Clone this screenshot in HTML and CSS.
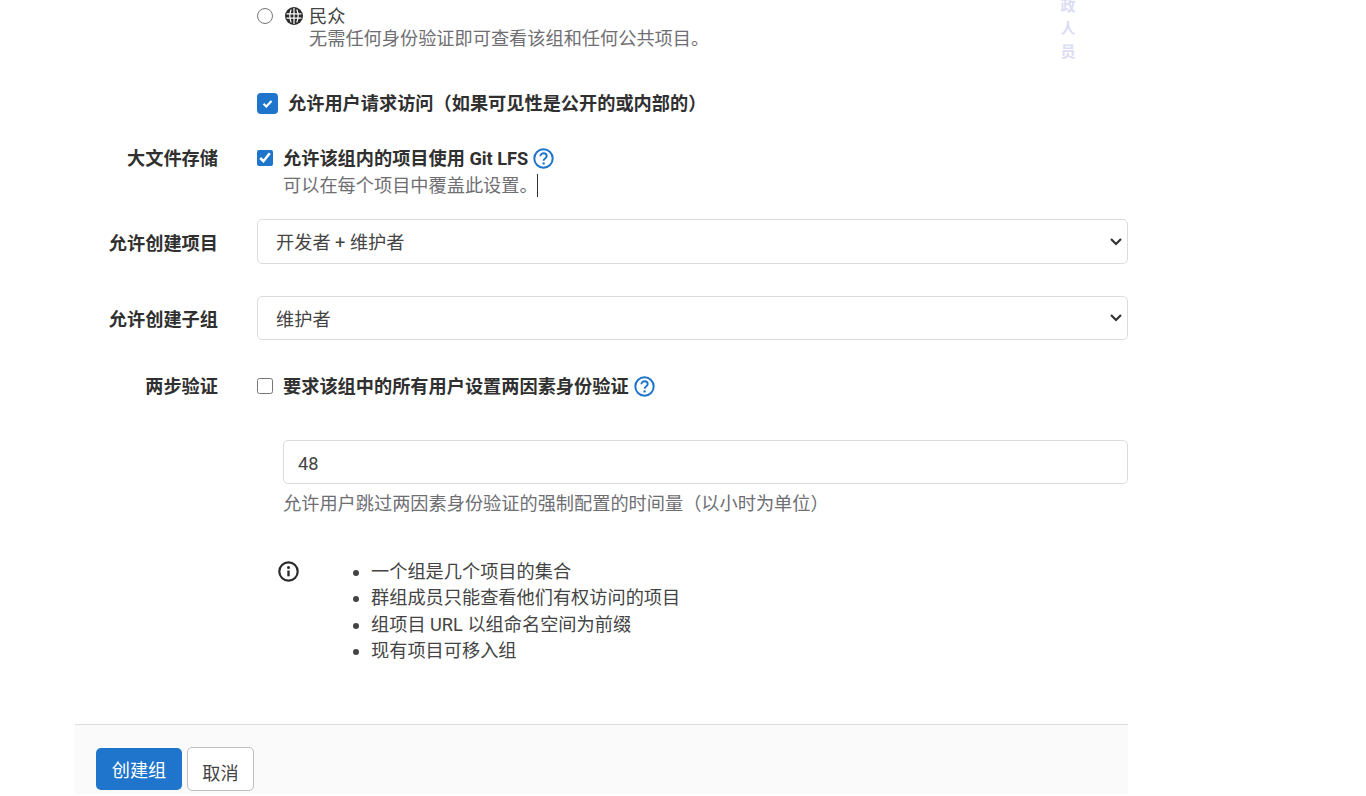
FILE: index.html
```html
<!DOCTYPE html>
<html lang="zh-CN">
<head>
  <meta charset="UTF-8" />
  <meta name="viewport" content="width=device-width, initial-scale=1.0" />
  <title>创建组</title>
  <link rel="stylesheet" href="styles.css">
</head>
<body>
  <div class="watermark">政<br>人<br>员</div>
  <form class="group-form">
    <div class="form-row">
      <div></div>
      <div class="visibility-option">
        <input type="radio" name="visibility" class="radio-input">
        <div>
          <div class="option-title">
            <svg class="globe-icon" viewBox="0 0 18 18">
              <circle cx="9" cy="9" r="9" fill="#2b2b2b"/>
              <path d="M1.500 6.800h15M1.500 11.200h15M9 1v16M6.200 2.500c-1.600 3.800-1.600 9.200 0 13M11.800 2.500c1.600 3.800 1.600 9.200 0 13" fill="none" stroke="#fff" stroke-width="1.200"/>
            </svg>
            民众
          </div>
          <div class="option-desc">无需任何身份验证即可查看该组和任何公共项目。</div>
        </div>
      </div>
    </div>

    <div class="form-row request-row">
      <div></div>
      <label class="check-line">
        <input type="checkbox" class="check-big" checked>
        <span class="strong-text">允许用户请求访问（如果可见性是公开的或内部的）</span>
      </label>
    </div>

    <div class="form-row lfs-row">
      <div class="row-label">大文件存储</div>
      <div>
        <label class="check-line small-gap">
          <input type="checkbox" class="check-small" checked>
          <span class="strong-text">允许该组内的项目使用 Git LFS</span>
          <svg class="help-icon" viewBox="0 0 21 21">
            <circle cx="10.500" cy="10.500" r="9.200" fill="none" stroke="#1f75cb" stroke-width="2"/>
            <path d="M7.400 8.300c0-1.900 1.400-3 3.200-3 1.800 0 3.100 1.100 3.100 2.700 0 2.500-3.100 2.400-3.100 4.700" fill="none" stroke="#1f75cb" stroke-width="1.900"/>
            <circle cx="10.600" cy="15.400" r="1.200" fill="#1f75cb"/>
          </svg>
        </label>
        <div class="lfs-note">可以在每个项目中覆盖此设置。<span class="text-caret"></span></div>
      </div>
    </div>

    <div class="form-row project-row">
      <div class="row-label select-label">允许创建项目</div>
      <select class="form-select tall">
        <option>开发者 + 维护者</option>
      </select>
    </div>

    <div class="form-row subgroup-row">
      <div class="row-label select-label">允许创建子组</div>
      <select class="form-select">
        <option>维护者</option>
      </select>
    </div>

    <div class="form-row twofactor-row">
      <div class="row-label">两步验证</div>
      <label class="check-line small-gap">
        <input type="checkbox" class="check-small">
        <span class="strong-text">要求该组中的所有用户设置两因素身份验证</span>
        <svg class="help-icon" viewBox="0 0 21 21">
          <circle cx="10.500" cy="10.500" r="9.200" fill="none" stroke="#1f75cb" stroke-width="2"/>
          <path d="M7.400 8.300c0-1.900 1.400-3 3.200-3 1.800 0 3.100 1.100 3.100 2.700 0 2.500-3.100 2.400-3.100 4.700" fill="none" stroke="#1f75cb" stroke-width="1.900"/>
          <circle cx="10.600" cy="15.400" r="1.200" fill="#1f75cb"/>
        </svg>
      </label>
    </div>

    <div class="form-row grace-row">
      <div></div>
      <div class="grace-field">
        <input type="text" class="form-input" value="48">
        <div class="field-help">允许用户跳过两因素身份验证的强制配置的时间量（以小时为单位）</div>
      </div>
    </div>

    <div class="form-row info-row">
      <div></div>
      <div class="info-block">
        <svg class="info-icon" viewBox="0 0 21 21">
          <circle cx="10.500" cy="10.500" r="9.200" fill="none" stroke="#2b2b2b" stroke-width="2.200"/>
          <circle cx="10.500" cy="6.500" r="1.500" fill="#2b2b2b"/>
          <path d="M10.500 9.500v5.800" fill="none" stroke="#2b2b2b" stroke-width="2.400"/>
        </svg>
        <ul class="info-list">
          <li>一个组是几个项目的集合</li>
          <li>群组成员只能查看他们有权访问的项目</li>
          <li>组项目 URL 以组命名空间为前缀</li>
          <li>现有项目可移入组</li>
        </ul>
      </div>
    </div>

    <div class="form-actions">
      <button type="button" class="btn-confirm">创建组</button>
      <button type="button" class="btn-cancel">取消</button>
    </div>
  </form>
</body>
</html>
```

FILE: styles.css
```css
:root {
  --primary-color: #1f75cb;
  --text-color: #303030;
  --muted-color: #6e6e73;
  --border-color: #dcdcde;
  --font-family: Roboto, "Noto Sans CJK SC", sans-serif;
}

* {
  box-sizing: border-box;
  margin: 0;
  padding: 0;
  font-family: var(--font-family);
}

html, body {
  height: 100%;
  background-color: white;
  color: var(--text-color);
  overflow: hidden;
}

body {
  font-size: 18.2px;
  line-height: 22px;
  position: relative;
}

.watermark {
  position: absolute;
  left: 1059px;
  top: -5px;
  width: 18px;
  text-align: center;
  font-size: 15px;
  line-height: 23px;
  font-weight: 700;
  color: #dcdcf4;
}

.group-form {
  width: 1053px;
  margin-left: 75px;
  padding-top: 6px;
}

.form-row {
  display: grid;
  grid-template-columns: 182px 871px;
}

.row-label {
  padding-right: 39px;
  text-align: right;
  font-weight: 700;
}

.select-label {
  padding-top: 14px;
}

.subgroup-row .select-label {
  padding-top: 13px;
}

.visibility-option {
  display: flex;
}

.radio-input {
  width: 16px;
  height: 16px;
  margin-top: 2px;
  margin-right: 12px;
  accent-color: var(--primary-color);
}

.option-title {
  display: flex;
  align-items: center;
  height: 22px;
  color: #444;
}

.globe-icon {
  width: 18px;
  height: 18px;
  margin-right: 6px;
  margin-bottom: 2px;
}

.option-desc {
  padding-left: 24px;
  color: var(--muted-color);
}

.request-row {
  margin-top: 43px;
}

.check-line {
  display: flex;
  align-items: center;
  height: 22px;
}

.check-big {
  width: 21px;
  height: 21px;
  margin-right: 10px;
  margin-bottom: 2px;
  appearance: none;
  border-radius: 4px;
  background-color: var(--primary-color);
  background-image: url("data:image/svg+xml,%3Csvg xmlns='http://www.w3.org/2000/svg' viewBox='0 0 21 21'%3E%3Cpath d='M6.500 10.800l2.800 2.700 5.200-5.500' fill='none' stroke='%23fff' stroke-width='2.200'/%3E%3C/svg%3E");
}

.check-small {
  width: 16px;
  height: 16px;
  margin-right: 10px;
  margin-bottom: 2px;
  accent-color: var(--primary-color);
}

.strong-text {
  font-weight: 700;
}

.help-icon {
  width: 21px;
  height: 21px;
  margin-left: 5px;
  margin-bottom: 2px;
}

.lfs-row {
  margin-top: 33px;
}

.lfs-note {
  position: relative;
  height: 22px;
  margin-top: 5px;
  padding-left: 26px;
  color: var(--muted-color);
}

/* text cursor sitting over the note */
.text-caret {
  position: absolute;
  left: 280px;
  top: -1px;
  width: 1px;
  height: 23px;
  background-color: #333;
}

.project-row {
  margin-top: 22px;
}

.subgroup-row {
  margin-top: 32px;
}

.form-select,
.form-input {
  width: 100%;
  height: 44px;
  padding-top: 2px;
  border: 1px solid var(--border-color);
  border-radius: 5px;
  background-color: white;
  color: #444;
  font-size: 18.2px;
  outline: none;
}

.form-select {
  padding-left: 18px;
  appearance: none;
  background-image: url("data:image/svg+xml,%3Csvg xmlns='http://www.w3.org/2000/svg' viewBox='0 0 14 10'%3E%3Cpath d='M2 2l5 5 5-5' fill='none' stroke='%23333' stroke-width='2.200'/%3E%3C/svg%3E");
  background-repeat: no-repeat;
  background-position: right 4px center;
  background-size: 14px 10px;
}

.form-select.tall {
  height: 45px;
}

.twofactor-row {
  margin-top: 36px;
}

.grace-row {
  margin-top: 42px;
}

.grace-field {
  padding-left: 26px;
}

.form-input {
  padding-left: 14px;
}

.field-help {
  margin-top: 9px;
  color: var(--muted-color);
}

.info-row {
  margin-top: 44px;
}

.info-block {
  display: flex;
  padding-left: 21px;
}

.info-icon {
  width: 21px;
  height: 21px;
  margin-top: 2px;
  flex-shrink: 0;
}

.info-list {
  margin-left: 72px;
  line-height: 26.300px;
  color: #444;
}

.form-actions {
  display: flex;
  align-items: flex-start;
  gap: 5px;
  height: 70px;
  margin-top: 60px;
  padding: 22px 0 0 21px;
  border-top: 1px solid var(--border-color);
  background-color: #fafafa;
}

.btn-confirm {
  width: 86px;
  height: 42px;
  margin-top: 1px;
  border: none;
  border-radius: 5px;
  background-color: var(--primary-color);
  color: white;
  font-size: 18.2px;
}

.btn-cancel {
  width: 67px;
  height: 44px;
  padding-top: 5px;
  border: 1px solid #bfbfbf;
  border-radius: 5px;
  background-color: white;
  color: #444;
  font-size: 18.2px;
}
```
